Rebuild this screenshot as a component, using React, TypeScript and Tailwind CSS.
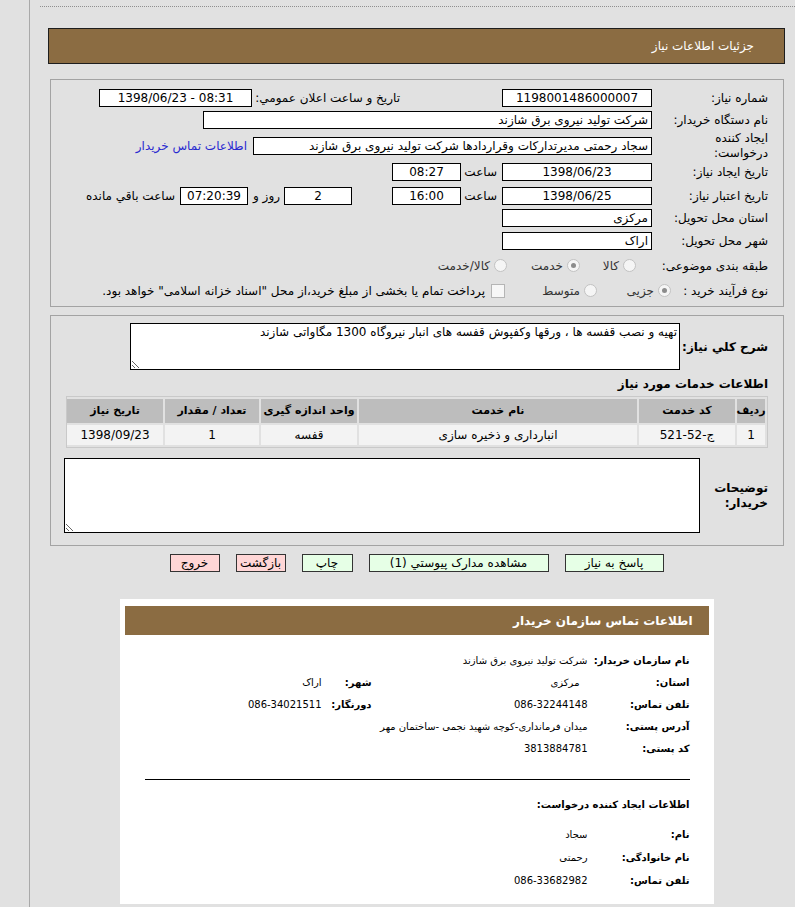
import React from 'react';

// فیلد فقط‌خواندنی با کادر مشکی
function Box({ className = '', dir, children }: { className?: string; dir?: 'ltr' | 'rtl'; children?: React.ReactNode }) {
  return (
    <div dir={dir} className={`h-[18px] shrink-0 overflow-hidden whitespace-nowrap border border-black bg-white px-[3px] leading-[16px] ${className}`}>
      {children}
    </div>
  );
}

function Radio({ checked }: { checked?: boolean }) {
  return (
    <span className="inline-flex h-[13px] w-[13px] shrink-0 items-center justify-center rounded-full border border-[#c2c2c2] bg-[#f5f5f5]">
      {checked && <span className="h-[5px] w-[5px] rounded-full bg-[#8c8c8c]" />}
    </span>
  );
}

// ردیف کارت اطلاعات تماس
function InfoLabel({ children, w = 'w-[102px]' }: { children: React.ReactNode; w?: string }) {
  return <div className={`${w} shrink-0 whitespace-nowrap text-[10px] font-bold tracking-[-0.2px]`}>{children}</div>;
}

const services = [
  { row: '1', code: 'ج-52-521', name: 'انبارداری و ذخیره سازی', unit: 'قفسه', qty: '1', date: '1398/09/23' },
];

export default function App() {
  return (
    <div dir="rtl" className="min-h-[907px] bg-[#e1e1e1] font-['DejaVu_Sans',sans-serif] text-[12px] leading-[16px] text-black">
      <div className="ml-[29px] min-h-[907px] border-l border-[#a9a9a9] pl-[10px]">
        <div className="pt-[6px]">
          <div className="border-t border-dotted border-[#8f8f8f]" />
        </div>

        <div className="ml-[8px] mr-[10px]">
          {/* نوار عنوان */}
          <div className="mt-[21px] flex h-[36px] items-center border border-[#1e1e1e] bg-[#8b6c42] pr-[30px] text-white">
            جزئیات اطلاعات نیاز
          </div>

          {/* بخش اول: مشخصات نیاز */}
          <div className="ml-[2px] mr-[1px] mt-[15px] border border-[#a3a3a3] pb-[4px] pr-[15px] pt-[7px]">
            <div className="flex h-[22px] items-center">
              <div className="w-[116px] shrink-0">شماره نیاز:</div>
              <Box className="w-[150px] text-center">1198001486000007</Box>
              <div className="w-[102px] shrink-0" />
              <div className="w-[148px] shrink-0">تاریخ و ساعت اعلان عمومي:</div>
              <Box dir="ltr" className="w-[153px] text-center">1398/06/23 - 08:31</Box>
            </div>

            <div className="flex h-[22px] items-center">
              <div className="w-[116px] shrink-0">نام دستگاه خریدار:</div>
              <Box className="w-[449px]">شرکت تولید نیروی برق شازند</Box>
            </div>

            <div className="flex h-[29px] items-center">
              <div className="w-[116px] shrink-0 leading-[15px]">
                ایجاد کننده
                <br />
                درخواست:
              </div>
              <Box className="w-[399px]">سجاد رحمتی مدیرتدارکات وقراردادها شرکت تولید نیروی برق شازند</Box>
              <a className="mr-[6px] whitespace-nowrap text-[#2a2ad0]">اطلاعات تماس خریدار</a>
            </div>

            <div className="flex h-[24px] items-center">
              <div className="w-[116px] shrink-0">تاریخ ایجاد نیاز:</div>
              <Box className="w-[150px] text-center">1398/06/23</Box>
              <div className="w-[41px] shrink-0 pr-[5px]">ساعت</div>
              <Box className="w-[69px] text-center">08:27</Box>
            </div>

            <div className="flex h-[23px] items-center">
              <div className="w-[116px] shrink-0">تاریخ اعتبار نیاز:</div>
              <Box className="w-[150px] text-center">1398/06/25</Box>
              <div className="w-[41px] shrink-0 pr-[5px]">ساعت</div>
              <Box className="w-[69px] text-center">16:00</Box>
              <div className="w-[40px] shrink-0" />
              <Box className="w-[68px] text-center">2</Box>
              <div className="w-[36px] shrink-0 whitespace-nowrap pr-[4px]">روز و</div>
              <Box className="w-[68px] bg-[#f0f0c4] text-center">07:20:39</Box>
              <div className="mr-[5px] whitespace-nowrap">ساعت باقي مانده</div>
            </div>

            <div className="flex h-[22px] items-center">
              <div className="w-[116px] shrink-0">استان محل تحویل:</div>
              <Box className="w-[150px]">مرکزی</Box>
            </div>

            <div className="flex h-[23px] items-center">
              <div className="w-[116px] shrink-0">شهر محل تحویل:</div>
              <Box className="w-[150px]">اراک</Box>
            </div>

            <div className="flex h-[27px] items-center">
              <div className="w-[116px] shrink-0">طبقه بندی موضوعی:</div>
              <div className="flex w-[72px] shrink-0 items-center gap-[4px] pr-[16px]">
                <Radio />
                <span className="text-[#333]">کالا</span>
              </div>
              <div className="flex w-[73px] shrink-0 items-center gap-[4px]">
                <Radio checked />
                <span className="text-[#333]">خدمت</span>
              </div>
              <div className="flex items-center gap-[4px]">
                <Radio />
                <span className="text-[#333]">کالا/خدمت</span>
              </div>
            </div>

            <div className="flex h-[23px] items-center">
              <div className="w-[97px] shrink-0">نوع فرآیند خرید :</div>
              <div className="flex w-[74px] shrink-0 items-center gap-[4px]">
                <Radio checked />
                <span className="text-[#333]">جزیی</span>
              </div>
              <div className="flex w-[92px] shrink-0 items-center gap-[4px]">
                <Radio />
                <span className="text-[#333]">متوسط</span>
              </div>
              <div className="flex items-center gap-[6px]">
                <span className="h-[14px] w-[14px] shrink-0 border border-[#b5b5b5] bg-[#f7f7f7]" />
                <span className="whitespace-nowrap">پرداخت تمام یا بخشی از مبلغ خرید،از محل "اسناد خزانه اسلامی" خواهد بود.</span>
              </div>
            </div>
          </div>

          {/* بخش دوم: شرح و خدمات */}
          <div className="ml-[2px] mr-[1px] mt-[8px] border border-[#a3a3a3] pb-[12px] pr-[15px] pt-[7px]">
            <div className="flex items-center">
              <div className="w-[88px] shrink-0 font-bold">شرح كلي نياز:</div>
              <textarea
                readOnly
                value="تهیه و نصب قفسه ها ، ورقها وکفپوش قفسه های انبار نیروگاه 1300 مگاواتی شازند"
                className="block h-[47px] w-[550px] border border-black bg-white px-[2px] py-0 text-[12px] leading-[16px]"
              />
            </div>

            <div className="mt-[6px] h-[17px] font-bold">اطلاعات خدمات مورد نیاز</div>

            <div className="mt-[3px] w-[702px] border border-[#c9c9c9] p-[2px]">
              <div className="grid grid-cols-[28px_96px_278px_96px_94px_96px] gap-[2px]">
                {['ردیف', 'کد خدمت', 'نام خدمت', 'واحد اندازه گیری', 'تعداد / مقدار', 'تاریخ نیاز'].map((h) => (
                  <div key={h} className="flex h-[24px] items-center justify-center bg-[#bdbdbd] text-[11px] font-bold">
                    {h}
                  </div>
                ))}
                {services.map((s) =>
                  [s.row, s.code, s.name, s.unit, s.qty, s.date].map((v, i) => (
                    <div key={i} className="flex h-[20px] items-center justify-center bg-[#f3f3f3]">
                      {v}
                    </div>
                  ))
                )}
              </div>
            </div>

            <div className="mt-[10px] flex items-center">
              <div className="w-[68px] shrink-0 font-bold leading-[15px]">
                توضیحات
                <br />
                خریدار:
              </div>
              <textarea
                readOnly
                className="block h-[75px] w-[636px] border border-black bg-white px-[2px] py-0 text-[12px]"
              />
            </div>
          </div>

          {/* دکمه‌ها */}
          <div className="mt-[8px] flex justify-center gap-[16px]">
            <button className="h-[18px] w-[99px] border border-[#333] bg-[#e6ffe6] text-[12px] leading-[16px]">پاسخ به نیاز</button>
            <button className="h-[18px] w-[180px] border border-[#333] bg-[#e6ffe6] text-[12px] leading-[16px]">مشاهده مدارک پیوستي (1)</button>
            <button className="h-[18px] w-[51px] border border-[#333] bg-[#e6ffe6] text-[12px] leading-[16px]">چاپ</button>
            <button className="h-[18px] w-[50px] border border-[#333] bg-[#ffd6d6] text-[12px] leading-[16px]">بازگشت</button>
            <button className="h-[18px] w-[50px] border border-[#333] bg-[#ffd6d6] text-[12px] leading-[16px]">خروج</button>
          </div>

          {/* کارت اطلاعات تماس */}
          <div className="mx-auto mt-[27px] w-[594px] bg-white px-[5px] pb-[12px] pt-[7px]">
            <div className="flex h-[29px] items-center bg-[#8b6c42] pr-[16px] text-[12px] font-bold text-white">
              اطلاعات تماس سازمان خریدار
            </div>

            <div className="mt-[15px] pr-[19px] text-[10px]">
              <div className="flex h-[22px] items-center">
                <InfoLabel>نام سازمان خریدار:</InfoLabel>
                <div>شرکت تولید نیروی برق شازند</div>
              </div>
              <div className="flex h-[22px] items-center">
                <InfoLabel>استان:</InfoLabel>
                <div className="w-[216px] shrink-0 pr-[8px]">مرکزی</div>
                <InfoLabel w="w-[50px]">شهر:</InfoLabel>
                <div>اراک</div>
              </div>
              <div className="flex h-[22px] items-center">
                <InfoLabel>تلفن تماس:</InfoLabel>
                <div className="w-[216px] shrink-0">086-32244148</div>
                <InfoLabel w="w-[50px]">دورنگار:</InfoLabel>
                <div>086-34021511</div>
              </div>
              <div className="flex h-[22px] items-center">
                <InfoLabel>آدرس پستی:</InfoLabel>
                <div>میدان فرمانداری-کوچه شهید نجمی -ساختمان مهر</div>
              </div>
              <div className="flex h-[22px] items-center">
                <InfoLabel>کد پستی:</InfoLabel>
                <div>3813884781</div>
              </div>
            </div>

            <div className="ml-[20px] mr-[19px] mt-[19px] border-t border-black" />

            <div className="mr-[19px] mt-[14px] flex h-[22px] items-center text-[10px] font-bold">اطلاعات ایجاد کننده درخواست:</div>

            <div className="mt-[7px] pr-[19px] text-[10px]">
              <div className="flex h-[23px] items-center">
                <InfoLabel>نام:</InfoLabel>
                <div>سجاد</div>
              </div>
              <div className="flex h-[23px] items-center">
                <InfoLabel>نام خانوادگی:</InfoLabel>
                <div>رحمتی</div>
              </div>
              <div className="flex h-[23px] items-center">
                <InfoLabel>تلفن تماس:</InfoLabel>
                <div>086-33682982</div>
              </div>
            </div>
          </div>
        </div>
      </div>
    </div>
  );
}
